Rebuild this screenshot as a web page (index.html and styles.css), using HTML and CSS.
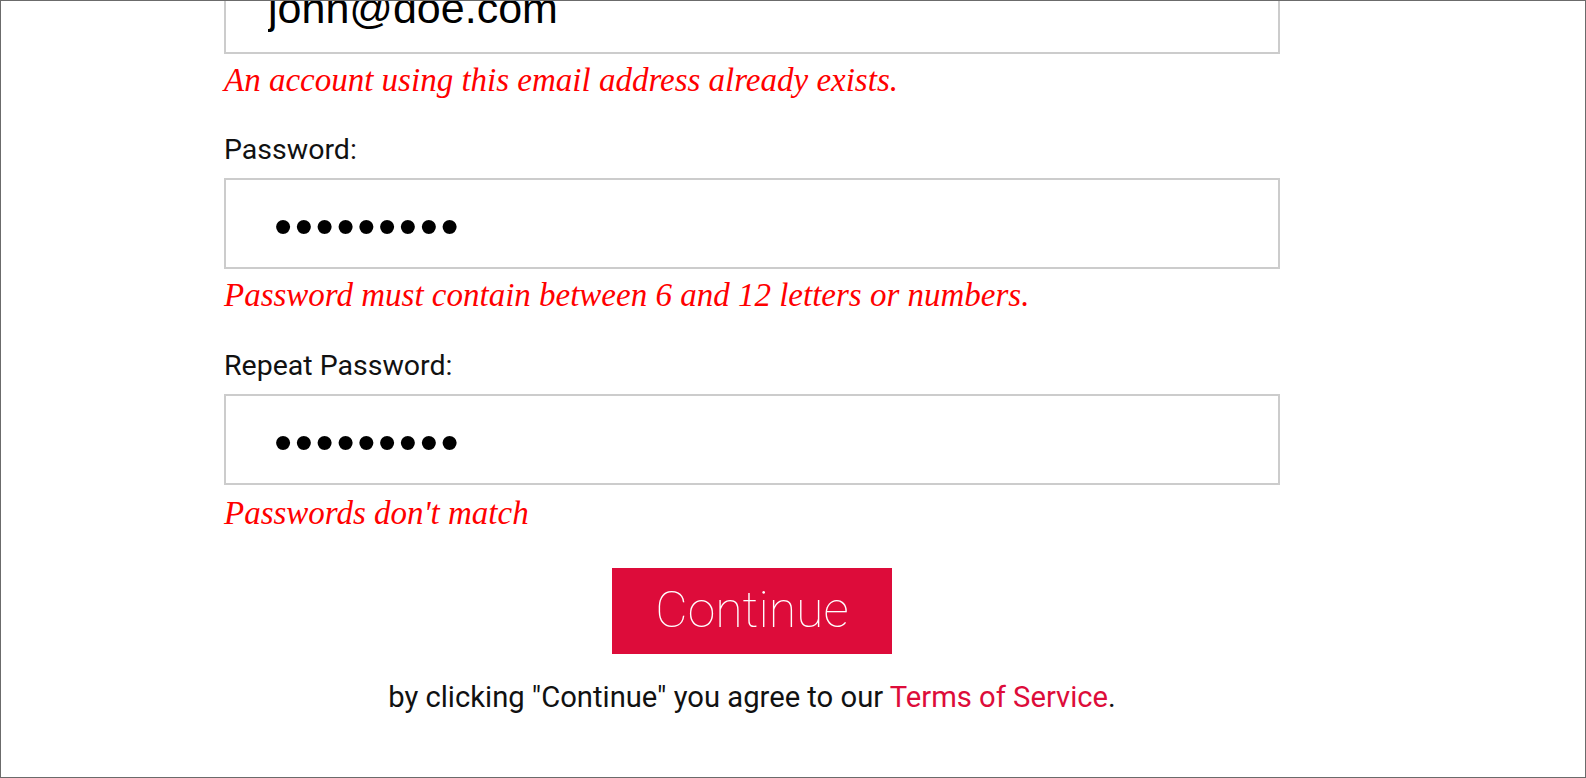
FILE: index.html
```html
<!DOCTYPE html>
<html lang="en">
<head>
    <meta charset="UTF-8">
    <meta name="viewport" content="width=device-width, initial-scale=1.0">
    <title>Create Account</title>
    <link rel="stylesheet" href="styles.css">
</head>
<body>

    <div class="frame">
        <form class="signup-form" onsubmit="return false;">

            <div class="field">
                <input type="email" class="text-input" value="john@doe.com">
                <p class="error">An account using this email address already exists.</p>
            </div>

            <div class="field">
                <label class="field-label" for="password">Password:</label>
                <input type="password" id="password" class="text-input" value="secret123">
                <p class="error">Password must contain between 6 and 12 letters or numbers.</p>
            </div>

            <div class="field field-repeat">
                <label class="field-label" for="repeat">Repeat Password:</label>
                <input type="password" id="repeat" class="text-input" value="secret124">
                <p class="error">Passwords don't match</p>
            </div>

            <div class="actions">
                <button type="submit" class="continue-btn">Continue</button>
                <p class="terms">by clicking "Continue" you agree to our <a href="#terms">Terms of Service</a>.</p>
            </div>

        </form>
    </div>

</body>
</html>
```

FILE: styles.css
```css
/* Page */
html, body {
    margin: 0;
    padding: 0;
    background-color: white;
}

body {
    font-family: Roboto, "Liberation Sans", sans-serif;
    color: #111;
}

/* Screenshot frame */
.frame {
    box-sizing: border-box;
    height: 778px;
    border: 1px solid #6b6b6b;
    overflow: hidden;
}

/* Form column (page is scrolled, so the email box is cut off at the top) */
.signup-form {
    width: 1056px;
    margin: -38px 0 0 223px;
}

.field + .field {
    margin-top: 32px;
}

.field + .field-repeat {
    margin-top: 33px;
}

.field-label {
    display: block;
    font-size: 28.5px;
    line-height: 36px;
    margin-bottom: 10px;
}

.text-input {
    display: block;
    box-sizing: border-box;
    width: 100%;
    height: 91px;
    padding: 0 40px 0 42px;
    border: 2px solid #cccccc;
    border-radius: 0;
    outline: none;
    font-family: "Liberation Sans", Arial, sans-serif;
    font-size: 43px;
    color: black;
    background-color: white;
}

.text-input[type="password"] {
    font-size: 52px;
    letter-spacing: 2.6px;
    padding-left: 48px;
    padding-top: 4px;
}

/* Validation messages */
.error {
    margin: 6px 0 0;
    font-family: "Liberation Serif", "DejaVu Serif", serif;
    font-style: italic;
    font-size: 33px;
    line-height: 40px;
    color: #ff0000;
}

.field-repeat .error {
    margin-top: 8px;
}

/* Submit */
.actions {
    display: flex;
    flex-direction: column;
    align-items: center;
    margin-top: 35px;
}

.continue-btn {
    width: 280px;
    height: 86px;
    padding: 0 0 3px;
    border: none;
    border-radius: 0;
    background-color: #dd0c3a;
    color: white;
    font-family: Roboto, sans-serif;
    font-weight: 100;
    font-size: 50px;
    cursor: pointer;
}

.terms {
    margin: 26px 0 0;
    font-size: 29.2px;
    line-height: 34px;
    color: #111;
}

.terms a {
    color: #dd0c3a;
    text-decoration: none;
}
```
